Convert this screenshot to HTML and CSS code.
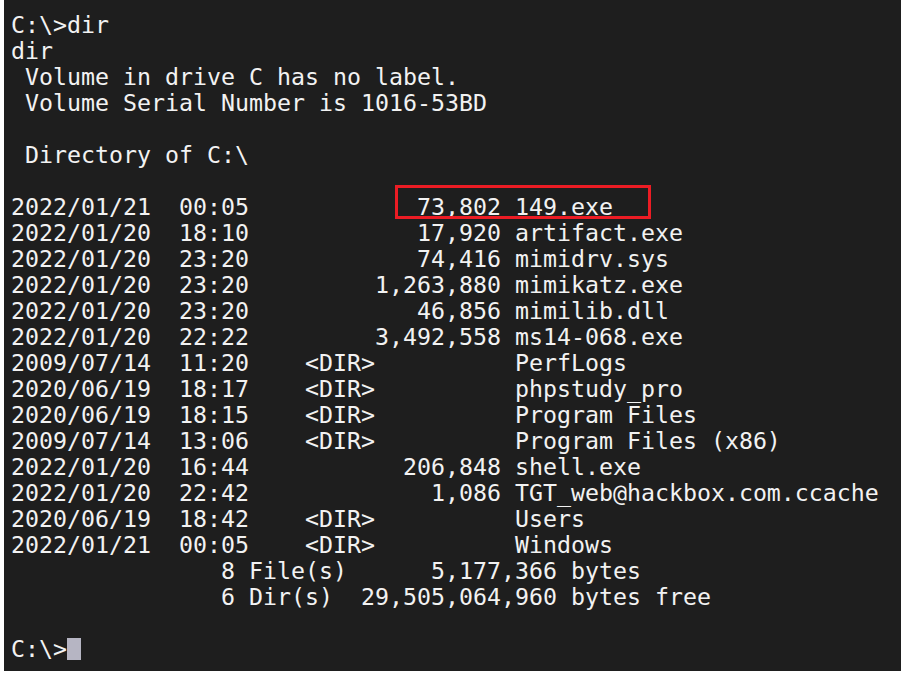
FILE: index.html
```html
<!DOCTYPE html>
<html lang="en">
<head>
    <meta charset="UTF-8">
    <title>cmd - dir</title>
    <link rel="stylesheet" href="styles.css">
</head>
<body>
    <div class="terminal">
<pre class="screen">C:\&gt;dir
dir
 Volume in drive C has no label.
 Volume Serial Number is 1016-53BD

 Directory of C:\

2022/01/21  00:05            73,802 149.exe
2022/01/20  18:10            17,920 artifact.exe
2022/01/20  23:20            74,416 mimidrv.sys
2022/01/20  23:20         1,263,880 mimikatz.exe
2022/01/20  23:20            46,856 mimilib.dll
2022/01/20  22:22         3,492,558 ms14-068.exe
2009/07/14  11:20    &lt;DIR&gt;          PerfLogs
2020/06/19  18:17    &lt;DIR&gt;          phpstudy_pro
2020/06/19  18:15    &lt;DIR&gt;          Program Files
2009/07/14  13:06    &lt;DIR&gt;          Program Files (x86)
2022/01/20  16:44           206,848 shell.exe
2022/01/20  22:42             1,086 TGT_web@hackbox.com.ccache
2020/06/19  18:42    &lt;DIR&gt;          Users
2022/01/21  00:05    &lt;DIR&gt;          Windows
               8 File(s)      5,177,366 bytes
               6 Dir(s)  29,505,064,960 bytes free

C:\&gt;<span class="cursor"></span><span class="mark"></span></pre>
    </div>
</body>
</html>
```

FILE: styles.css
```css
/* page */
body {
    margin: 0;
    background-color: #ffffff;
}

/* console window */
.terminal {
    margin-left: 4px;
    width: 897px;
    height: 671px;
    background-color: #1e1e1e;
    padding: 12px 0 0 7px;
    box-sizing: border-box;
    overflow: hidden;
}
.screen {
    position: relative;
    margin: 0;
    font-family: "DejaVu Sans Mono", "Liberation Mono", monospace;
    font-size: 23.25px;
    line-height: 26px;
    color: #f2f2f2;
}

.cursor {
    display: inline-block;
    width: 14px;
    height: 22px;
    vertical-align: -3px;
    background-color: #b6b5c3;
}

/* red marker round the 149.exe row */
.mark {
    position: absolute;
    left: 384px;
    top: 173px;
    width: 256px;
    height: 34px;
    border: 3px solid #ec1c24;
    box-sizing: border-box;
}
```
